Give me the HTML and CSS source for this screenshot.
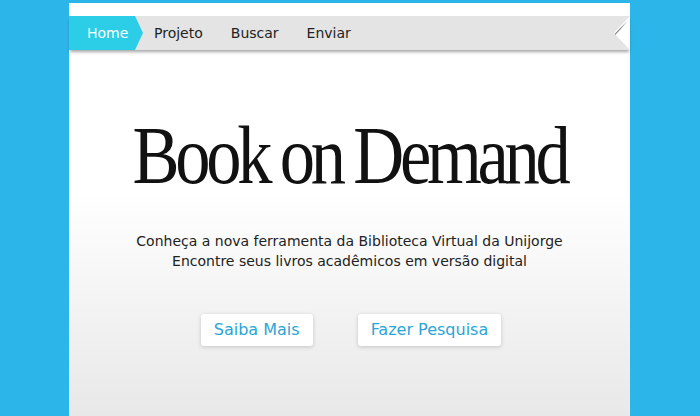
FILE: index.html
```html
<!DOCTYPE html>
<html lang="pt">

<head>
    <title>Book on Demand</title>
    <meta charset="UTF-8">
    <meta name="viewport" content="width=device-width, initial-scale=1">
    <link rel="stylesheet" href="styles.css">
</head>

<body>
    <div class="page">
        <div class="menu">
            <a class="item home" href="#">Home</a>
            <a class="item" href="#">Projeto</a>
            <a class="item" href="#">Buscar</a>
            <a class="item" href="#">Enviar</a>
        </div>
        <h1 class="titulo">Book on Demand</h1>
        <p class="texto">Conheça a nova ferramenta da Biblioteca Virtual da Unijorge<br>Encontre seus livros acadêmicos em versão digital</p>
        <div class="botoes">
            <a class="botao" href="#">Saiba Mais</a>
            <a class="botao" href="#">Fazer Pesquisa</a>
        </div>
    </div>
</body>

</html>
```

FILE: styles.css
```css
html,
body {
    margin: 0;
    height: 100%;
    overflow: hidden;
}

body {
    background: #2cb5e8;
    font-family: "DejaVu Sans", Verdana, sans-serif;
}

.page {
    width: 561px;
    height: 413px;
    margin: 3px 0 0 69px;
    padding-top: 13px;
    box-sizing: border-box;
    background: linear-gradient(to bottom, #ffffff 0, #ffffff 190px, #e8e8e8 100%);
}

.menu {
    position: relative;
    display: flex;
    align-items: center;
    height: 34px;
    background: #e4e4e4;
    box-shadow: 0 3px 3px -1px rgba(0, 0, 0, 0.35);
}

/* recorte em seta no fim da barra */
.menu::after {
    content: "";
    position: absolute;
    right: 0;
    top: 0;
    border-style: solid;
    border-width: 17px 16px 17px 0;
    border-color: transparent #ffffff transparent transparent;
}

.menu::before {
    content: "";
    position: absolute;
    right: 2px;
    top: 4px;
    width: 19px;
    height: 1px;
    background: linear-gradient(to left, rgba(120, 120, 120, 0), #777 60%);
    transform: rotate(-47deg);
    transform-origin: right center;
    z-index: 1;
}

.item {
    font-size: 14px;
    color: #222;
    text-decoration: none;
    margin-right: 28px;
}

.home {
    display: flex;
    align-items: center;
    height: 34px;
    width: 74px;
    box-sizing: border-box;
    padding-left: 18px;
    margin-right: 11px;
    color: #fff;
    background: #2ccde6;
    clip-path: polygon(0 0, 66px 0, 74px 50%, 66px 100%, 0 100%);
}

.titulo {
    margin: 65px 0 0;
    text-align: center;
    font-family: "Liberation Serif", "Times New Roman", serif;
    font-weight: normal;
    font-size: 82px;
    line-height: 82px;
    letter-spacing: -5px;
    word-spacing: -2px;
    color: #111;
    transform: scaleX(0.86);
}

.texto {
    margin: 34px 0 0;
    text-align: center;
    font-size: 14px;
    line-height: 20px;
    color: #222;
}

.botoes {
    display: flex;
    justify-content: center;
    gap: 45px;
    margin-top: 43px;
    padding-left: 3px;
}

.botao {
    display: block;
    height: 32px;
    line-height: 32px;
    padding: 0 13px;
    background: #fff;
    border-radius: 3px;
    box-shadow: 0 1px 4px rgba(0, 0, 0, 0.18);
    color: #2aa5d8;
    font-size: 16px;
    text-decoration: none;
}
```
